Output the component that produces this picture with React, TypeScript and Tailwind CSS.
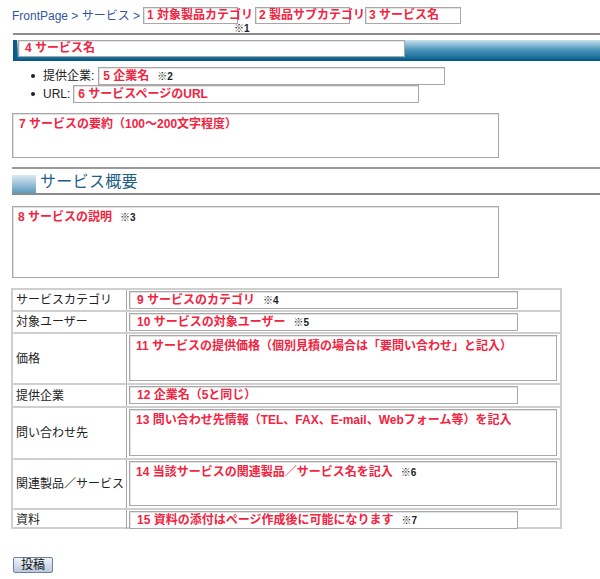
import React from "react";

const red = "text-[#f2243f] font-bold";

const Note = ({ n }: { n: string }) => (
  <span className="ml-[8px] text-[10px] font-bold text-[#222]">※{n}</span>
);

const Box = ({
  className,
  children,
}: {
  className: string;
  children?: React.ReactNode;
}) => (
  <div
    className={`border border-[#a8a8a8] bg-white shadow-[inset_1px_1px_0_#e2e2e2] whitespace-nowrap text-[12px] ${className}`}
  >
    {children}
  </div>
);

// row heights include the 2px rule above each row
const rows: { label: string; h: string; multi?: boolean; text: string; note?: string }[] = [
  { label: "サービスカテゴリ", h: "h-[20px]", text: "9  サービスのカテゴリ", note: "4" },
  { label: "対象ユーザー", h: "h-[22px]", text: "10 サービスの対象ユーザー", note: "5" },
  {
    label: "価格",
    h: "h-[51px]",
    multi: true,
    text: "11 サービスの提供価格（個別見積の場合は「要問い合わせ」と記入）",
  },
  { label: "提供企業", h: "h-[23px]", text: "12 企業名（5と同じ）" },
  {
    label: "問い合わせ先",
    h: "h-[52px]",
    multi: true,
    text: "13 問い合わせ先情報（TEL、FAX、E-mail、Webフォーム等）を記入",
  },
  {
    label: "関連製品／サービス",
    h: "h-[50px]",
    multi: true,
    text: "14 当該サービスの関連製品／サービス名を記入",
    note: "6",
  },
  { label: "資料", h: "h-[19px]", text: "15 資料の添付はページ作成後に可能になります", note: "7" },
];

export default function App() {
  return (
    <div
      className="w-[600px] h-[579px] bg-white text-[#222] overflow-hidden"
      style={{ fontFamily: '"Liberation Sans", "Noto Sans CJK JP", sans-serif' }}
    >
      {/* breadcrumb */}
      <div className="flex items-start pt-[7px] pl-[12px] h-[33px]">
        <div className="text-[12px] text-[#33559e] leading-[18px] whitespace-nowrap">
          FrontPage &gt; サービス &gt;
        </div>
        <div className="relative ml-[3px]">
          <Box className={`w-[95px] h-[17px] pl-[3px] leading-[15px] ${red}`}>1 対象製品カテゴリ</Box>
          <span className="absolute left-[91px] top-[17px] text-[10px] font-bold leading-[10px]">※1</span>
        </div>
        <Box className={`ml-[17px] w-[95px] h-[17px] pl-[3px] leading-[15px] ${red}`}>
          2 製品サブカテゴリ
        </Box>
        <Box className={`ml-[15px] w-[96px] h-[17px] pl-[3px] leading-[15px] ${red}`}>3 サービス名</Box>
      </div>

      {/* top rule */}
      <div className="ml-[13px] h-[2px] bg-[#8c8c8c]" />

      {/* title bar */}
      <div className="ml-[13px] mt-[5px] h-[21px] border-l-[4px] border-[#0d5b86] border-b-[2px] border-b-[#0a5a86] bg-gradient-to-b from-[#c6e3ee] via-[#4d97bd] to-[#0b6794]">
        <Box className={`ml-[1px] w-[387px] h-[17px] pl-[6px] leading-[15px] ${red}`}>4 サービス名</Box>
      </div>

      {/* bullets */}
      <ul className="mt-[6px] pl-[31px] text-[12px]">
        <li className="flex items-center h-[18px]">
          <span className="w-[4px] h-[4px] rounded-full bg-[#222] mr-[8px]" />
          <span>提供企業:</span>
          <Box className={`ml-[4px] w-[347px] h-[18px] pl-[4px] leading-[16px] ${red}`}>
            5 企業名<Note n="2" />
          </Box>
        </li>
        <li className="flex items-center h-[18px]">
          <span className="w-[4px] h-[4px] rounded-full bg-[#222] mr-[8px]" />
          <span>URL:</span>
          <Box className={`ml-[3px] w-[346px] h-[18px] pl-[4px] leading-[16px] ${red}`}>6 サービスページのURL</Box>
        </li>
      </ul>

      {/* summary */}
      <Box className={`ml-[12px] mt-[10px] w-[487px] h-[45px] pl-[6px] pt-[2px] leading-[16px] ${red}`}>
        7 サービスの要約（100～200文字程度）
      </Box>

      <div className="ml-[12px] mt-[9px] h-[2px] bg-[#9a9a9a]" />

      {/* section heading */}
      <div className="ml-[12px] mt-[6px] flex items-end h-[20px] border-b-[2px] border-[#8a8a8a]">
        <div className="w-[24px] h-[18px] bg-gradient-to-b from-[#dbe9f1] to-[#5d9cc0]" />
        <div className="ml-[4px] text-[16px] leading-[22px] text-[#1b5f86] tracking-[0.3px]">サービス概要</div>
      </div>

      {/* description */}
      <Box className={`ml-[12px] mt-[11px] w-[487px] h-[72px] pl-[5px] pt-[2px] leading-[16px] ${red}`}>
        8 サービスの説明<Note n="3" />
      </Box>

      {/* table */}
      <div className="ml-[11px] mt-[10px] w-[551px] border-2 border-[#cfcfcf] text-[12px]">
        {rows.map((r, i) => (
          <div
            key={r.label}
            className={`grid grid-cols-[114px_1fr] ${r.h} ${i > 0 ? "border-t-2 border-[#cfcfcf]" : ""}`}
          >
            <div className="flex items-center pl-[3px] border-r border-[#a8a8a8] whitespace-nowrap">{r.label}</div>
            <div className="pl-[2px] pt-[1px]">
              {r.multi ? (
                <Box className={`w-[428px] h-[calc(100%-2px)] pl-[6px] pt-[2px] leading-[16px] ${red}`}>
                  {r.text}
                  {r.note && <Note n={r.note} />}
                </Box>
              ) : (
                <Box className={`w-[389px] h-[18px] pl-[7px] leading-[16px] ${red}`}>
                  {r.text}
                  {r.note && <Note n={r.note} />}
                </Box>
              )}
            </div>
          </div>
        ))}
      </div>

      <button className="block ml-[13px] mt-[28px] w-[40px] h-[16px] text-[12px] leading-[14px] text-[#111] border border-[#6f7f9c] rounded-[2px] bg-gradient-to-b from-[#eef3f9] to-[#b9c9de]">
        投稿
      </button>
    </div>
  );
}
